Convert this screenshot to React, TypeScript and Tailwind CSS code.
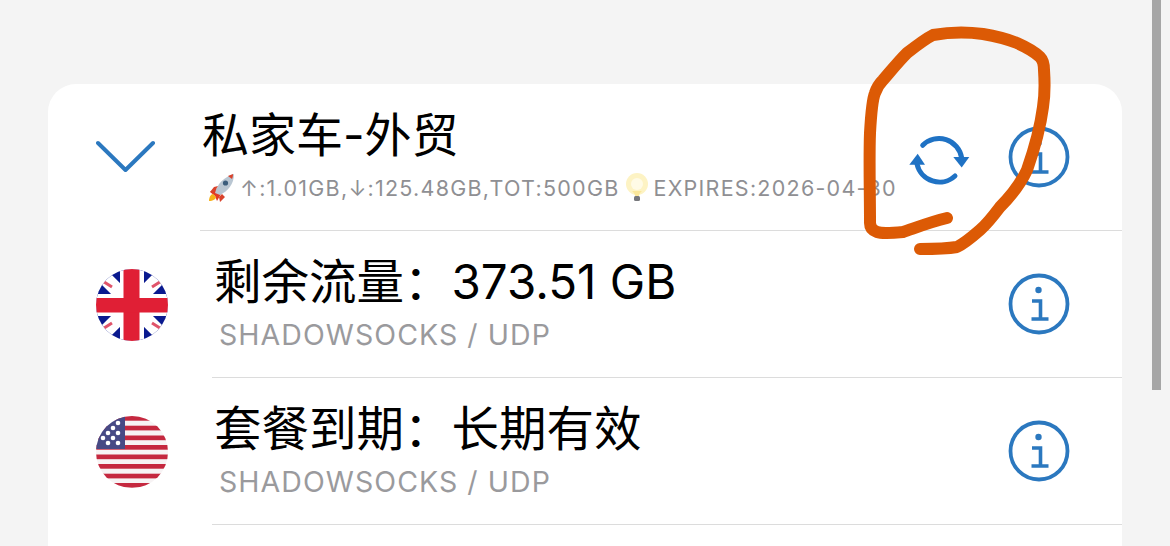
import React from "react";

const cjk = { fontFamily: 'Inter, "Noto Sans CJK SC", sans-serif' };

function Info() {
  return (
    <svg width="64" height="64" viewBox="0 0 64 64" fill="none" className="shrink-0">
      <circle cx="32" cy="32" r="28.500" stroke="#2b78bf" strokeWidth="3.800" />
      <circle cx="31.500" cy="18" r="3.200" fill="#2b78bf" />
      <path d="M25 29h8.500v18M24.500 47h17" stroke="#2b78bf" strokeWidth="3.600" />
    </svg>
  );
}

function Refresh() {
  return (
    <svg width="70" height="70" viewBox="0 0 70 70" fill="none" className="shrink-0">
      <path d="M22.700 23.300A23 23 0 0 1 61.700 36" stroke="#1f72c4" strokeWidth="5" strokeLinecap="round" />
      <path d="M55 54A23 23 0 0 1 17 42" stroke="#1f72c4" strokeWidth="5" strokeLinecap="round" />
      <path d="M53.300 35H69.300L61.700 45.500Z" fill="#1f72c4" />
      <path d="M9.300 42.700H25L17.700 31.700Z" fill="#1f72c4" />
    </svg>
  );
}

function Rocket() {
  return (
    <svg width="28" height="30" viewBox="0 0 28 30" className="shrink-0">
      <path d="M3 19l6-4 5 6-4 7-2-5z" fill="#e23b25" />
      <path d="M2 28c0-4 2-7 4-7l3 3c0 2-3 4-7 4z" fill="#f6b21b" />
      <path d="M8 20C10 11 17 4 27 1c0 10-6 17-14 21z" fill="#b9c6d2" />
      <path d="M21 3l5-2c0 2-.5 4-1 5z" fill="#d9432c" />
      <circle cx="18.500" cy="10" r="2.600" fill="#3b5d7c" />
      <path d="M15 21l3 3-5 5-1-5zM7 14l4-1-4 6-4 0z" fill="#d9432c" />
    </svg>
  );
}

function Bulb() {
  return (
    <svg width="26" height="30" viewBox="0 0 26 30" className="shrink-0">
      <circle cx="13" cy="11" r="11" fill="#fdf3c4" />
      <circle cx="13" cy="11" r="6" fill="#fffbe6" />
      <path d="M8 18c2 2 3 3 3 5h4c0-2 1-3 3-5z" fill="#fbe79a" />
      <rect x="10" y="23" width="6" height="5" rx="1.500" fill="#77787c" />
    </svg>
  );
}

function UK() {
  return (
    <svg width="72" height="72" viewBox="0 0 72 72" className="shrink-0">
      <defs>
        <clipPath id="uk"><circle cx="36" cy="36" r="36" /></clipPath>
      </defs>
      <g clipPath="url(#uk)">
        <rect width="72" height="72" fill="#0a1a8f" />
        <path d="M0 0L72 72M72 0L0 72" stroke="#fff" strokeWidth="14" />
        <path d="M5 11L16 18M67 11L56 18M5 61L16 54M67 61L56 54" stroke="#e0546a" strokeWidth="3" />
        <rect x="24" width="24" height="72" fill="#fff" />
        <rect y="25" width="72" height="22" fill="#fff" />
        <rect x="27.500" width="16" height="72" fill="#e01f35" />
        <rect y="29" width="72" height="14.500" fill="#e01f35" />
      </g>
    </svg>
  );
}

function US() {
  const stripes = [0, 9.700, 19.500, 29, 38.500, 48, 57.700, 67];
  const stars = [
    [22, 7], [17, 12], [12, 17], [22, 17], [7, 22], [17, 22], [12, 27], [22, 27],
  ];
  return (
    <svg width="72" height="72" viewBox="0 0 72 72" className="shrink-0">
      <defs>
        <clipPath id="us"><circle cx="36" cy="36" r="36" /></clipPath>
      </defs>
      <g clipPath="url(#us)">
        <rect width="72" height="72" fill="#f7f3f4" />
        {stripes.map((y) => (
          <rect key={y} y={y} width="72" height="4.700" fill="#c5283f" />
        ))}
        <rect width="29" height="33" fill="#474a85" />
        {stars.map(([x, y]) => (
          <circle key={`${x}-${y}`} cx={x} cy={y} r="2.300" fill="#fff" />
        ))}
      </g>
    </svg>
  );
}

function Row({ flag, title }: { flag: React.ReactNode; title: string }) {
  return (
    <div className="flex h-[147px] items-stretch">
      <div className="flex w-[164px] shrink-0 items-center pl-[48px]">{flag}</div>
      <div className="flex flex-1 items-center border-b border-[#dcdcdc] pr-[51px]">
        <div className="flex-1 pl-[2px] pb-[4px]">
          <div className="text-[47.500px] leading-[60px] text-black" style={cjk}>{title}</div>
          <div className="mt-[5px] pl-[5px] text-[28.500px] leading-[36px] tracking-[1.060px] text-[#9a9a9d] font-['Inter',sans-serif]">
            SHADOWSOCKS / UDP
          </div>
        </div>
        <Info />
      </div>
    </div>
  );
}

export default function App() {
  return (
    <div className="relative h-[546px] w-[1170px] overflow-hidden bg-[#f4f4f4]">
      <div className="pl-[48px] pr-[48px] pt-[84px]">
        <div className="h-[500px] rounded-t-[28px] bg-white">
          <div className="flex h-[147px] items-stretch">
            <div className="flex w-[152px] shrink-0 items-center pl-[48px]">
              <svg width="60" height="34" viewBox="0 0 60 34" fill="none" className="mt-[-2px]">
                <path d="M2 3L29.500 30L57 3" stroke="#2b78bf" strokeWidth="4" strokeLinecap="round" strokeLinejoin="round" />
              </svg>
            </div>
            <div className="flex flex-1 items-center border-b border-[#dcdcdc] pr-[51px]">
              <div className="min-w-0 flex-1 pl-[2px] pb-[6px]">
                <div className="text-[47px] leading-[60px] text-black" style={cjk}>私家车-外贸</div>
                <div className="mt-[8px] ml-[5px] flex items-center gap-[4px] text-[21.500px] leading-[30px] tracking-[1.250px] whitespace-nowrap text-[#8f8f93] font-['Inter',sans-serif]">
                  <Rocket />
                  <span className="ml-[1px]">↑:1.01GB,↓:125.48GB,TOT:500GB</span>
                  <Bulb />
                  <span>EXPIRES:2026-04-30</span>
                </div>
              </div>
              <div className="mr-[37px]"><Refresh /></div>
              <Info />
            </div>
          </div>
          <Row flag={<UK />} title="剩余流量：373.51 GB" />
          <Row flag={<US />} title="套餐到期：长期有效" />
        </div>
      </div>
      <div className="absolute left-[1152px] top-0 h-[390px] w-[9px] bg-[#a6a6a6]" />
      <svg className="absolute inset-0" width="1170" height="546" viewBox="0 0 1170 546" fill="none">
        <path
          d="M947 218C930 222 915 228 903 232C892 233 880 233 877 232C871 230 870 226 870 223C870 190 869 160 870 133C871 115 872 100 875 93C877 87 880 83 883 80C890 72 898 62 907 53C916 46 925 39 933 35C950 32 968 32 983 34C995 36 1007 39 1017 43C1026 47 1034 51 1040 57C1043 60 1044 65 1044 70C1045 85 1045 95 1043 107C1040 130 1034 150 1027 170C1020 185 1010 197 1000 207C994 215 988 223 980 230C972 237 965 243 957 247C945 249 932 249 920 249"
          stroke="#dc5a05"
          strokeWidth="12"
          strokeLinecap="round"
          strokeLinejoin="round"
        />
      </svg>
    </div>
  );
}
